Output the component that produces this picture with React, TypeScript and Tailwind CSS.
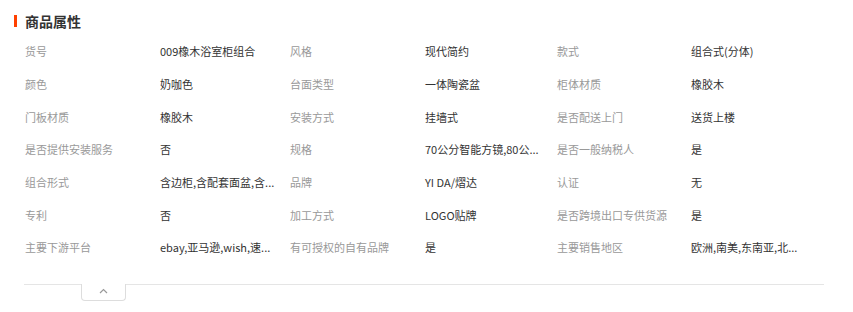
import React from "react";

type Attr = { label: string; value: string };

const attrs: Attr[][] = [
  [
    { label: "货号", value: "009橡木浴室柜组合" },
    { label: "风格", value: "现代简约" },
    { label: "款式", value: "组合式(分体)" },
  ],
  [
    { label: "颜色", value: "奶咖色" },
    { label: "台面类型", value: "一体陶瓷盆" },
    { label: "柜体材质", value: "橡胶木" },
  ],
  [
    { label: "门板材质", value: "橡胶木" },
    { label: "安装方式", value: "挂墙式" },
    { label: "是否配送上门", value: "送货上楼" },
  ],
  [
    { label: "是否提供安装服务", value: "否" },
    { label: "规格", value: "70公分智能方镜,80公..." },
    { label: "是否一般纳税人", value: "是" },
  ],
  [
    { label: "组合形式", value: "含边柜,含配套面盆,含..." },
    { label: "品牌", value: "YI DA/熠达" },
    { label: "认证", value: "无" },
  ],
  [
    { label: "专利", value: "否" },
    { label: "加工方式", value: "LOGO贴牌" },
    { label: "是否跨境出口专供货源", value: "是" },
  ],
  [
    { label: "主要下游平台", value: "ebay,亚马逊,wish,速..." },
    { label: "有可授权的自有品牌", value: "是" },
    { label: "主要销售地区", value: "欧洲,南美,东南亚,北..." },
  ],
];

export default function App() {
  return (
    <div
      className="w-[853px] h-[312px] bg-white overflow-hidden"
      style={{ fontFamily: '"Noto Sans CJK SC", "Noto Sans", sans-serif' }}
    >
      {/* section heading */}
      <div className="flex items-center h-[12px] mt-[15px] ml-[14px]">
        <span className="w-[3px] h-[12px] bg-[#ff4000]" />
        <span className="ml-[8px] text-[14px] font-bold text-[#333] leading-[16px]">
          商品属性
        </span>
      </div>

      {/* attribute grid */}
      <div className="ml-[25px] mt-[8px] w-[798px]">
        {attrs.map((row, i) => (
          <div
            key={i}
            className="grid grid-cols-[135px_130px_135px_132px_134px_132px] h-[32.67px] items-center text-[11px] leading-[16px]"
          >
            {row.map((a) => (
              <React.Fragment key={a.label}>
                <span className="text-[#999] whitespace-nowrap">{a.label}</span>
                <span className="text-[#333] whitespace-nowrap">{a.value}</span>
              </React.Fragment>
            ))}
          </div>
        ))}
      </div>

      {/* divider and collapse toggle */}
      <div className="ml-[24px] mt-[20px] w-[800px] border-t border-[#e5e5e5]">
        <button className="ml-[57px] -mt-px w-[45px] h-[17px] border border-[#ddd] border-t-0 rounded-b-[4px] bg-white flex items-start justify-center">
          <svg width="9" height="6" viewBox="0 0 9 6" className="mt-[4px]">
            <path d="M1 5 L4.5 1.5 L8 5" fill="none" stroke="#999" strokeWidth="1.2" />
          </svg>
        </button>
      </div>
    </div>
  );
}
